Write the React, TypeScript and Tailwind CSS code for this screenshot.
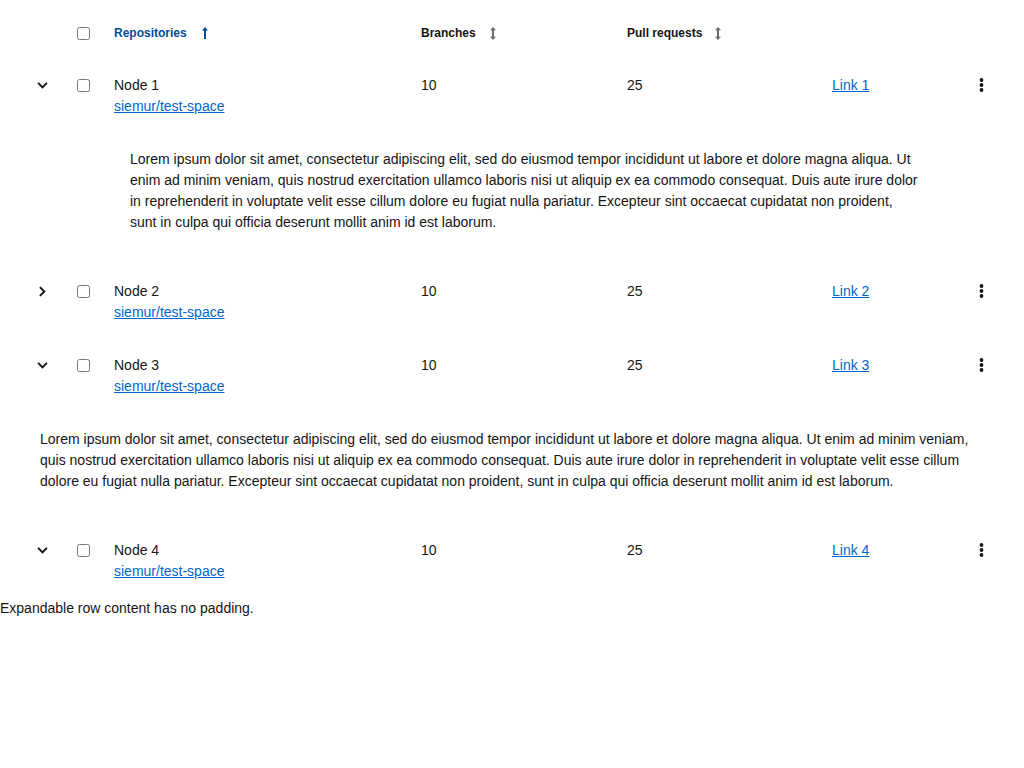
import React, { useState } from 'react';

const LOREM =
  'Lorem ipsum dolor sit amet, consectetur adipiscing elit, sed do eiusmod tempor incididunt ut labore et dolore magna aliqua. Ut enim ad minim veniam, quis nostrud exercitation ullamco laboris nisi ut aliquip ex ea commodo consequat. Duis aute irure dolor in reprehenderit in voluptate velit esse cillum dolore eu fugiat nulla pariatur. Excepteur sint occaecat cupidatat non proident, sunt in culpa qui officia deserunt mollit anim id est laborum.';

interface Repo {
  name: string;
  branches: number;
  prs: number;
  link: string;
  detail: 'indented' | 'full' | 'nopad' | null;
}

const repos: Repo[] = [
  { name: 'Node 1', branches: 10, prs: 25, link: 'Link 1', detail: 'indented' },
  { name: 'Node 2', branches: 10, prs: 25, link: 'Link 2', detail: null },
  { name: 'Node 3', branches: 10, prs: 25, link: 'Link 3', detail: 'full' },
  { name: 'Node 4', branches: 10, prs: 25, link: 'Link 4', detail: 'nopad' },
];

const AngleDown = () => (
  <svg width="11" height="7" viewBox="0 0 11 7" fill="#151515">
    <path d="M0.4 1.6 L1.8 0.2 L5.5 3.9 L9.2 0.2 L10.6 1.6 L5.5 6.7 Z" />
  </svg>
);

const AngleRight = () => (
  <svg width="7" height="11" viewBox="0 0 7 11" fill="#151515">
    <path d="M1.6 0.4 L0.2 1.8 L3.9 5.5 L0.2 9.2 L1.6 10.6 L6.7 5.5 Z" />
  </svg>
);

const Kebab = () => (
  <svg width="5" height="14" viewBox="0 0 5 14" fill="#151515">
    <circle cx="2.5" cy="2" r="1.9" />
    <circle cx="2.5" cy="7" r="1.9" />
    <circle cx="2.5" cy="12" r="1.9" />
  </svg>
);

const SortUp = () => (
  <svg width="6" height="12" viewBox="0 0 6 12" fill="#004d99">
    <path d="M3 0 L6 3.5 L4 3.5 L4 12 L2 12 L2 3.5 L0 3.5 Z" />
  </svg>
);

const SortBoth = () => (
  <svg width="6" height="13" viewBox="0 0 6 13" fill="#6a6e73">
    <path d="M3 0 L6 3.2 L4 3.2 L4 9.8 L6 9.8 L3 13 L0 9.8 L2 9.8 L2 3.2 L0 3.2 Z" />
  </svg>
);

export default function App() {
  const [open, setOpen] = useState<Record<number, boolean>>({ 0: true, 1: false, 2: true, 3: true });

  return (
    <div
      className="w-[1024px] bg-white text-[#151515] text-sm leading-[21px]"
      style={{ fontFamily: '"Liberation Sans", Arial, sans-serif' }}
    >
      {/* header */}
      <div className="flex items-start pt-[24px] pb-4 text-xs leading-[18px] font-semibold">
        <div className="w-[64px]" />
        <div className="w-[50px] h-[18px] flex items-center">
          <input type="checkbox" className="ml-[13px] w-[13px] h-[13px]" />
        </div>
        <div className="w-[307px] flex items-center text-[#004d99]">
          Repositories
          <span className="ml-[15px] flex items-center"><SortUp /></span>
        </div>
        <div className="w-[206px] flex items-center">
          Branches
          <span className="ml-[14px] flex items-center"><SortBoth /></span>
        </div>
        <div className="w-[205px] flex items-center">
          Pull requests
          <span className="ml-[13px] flex items-center"><SortBoth /></span>
        </div>
        <div className="flex-1" />
      </div>

      {repos.map((r, i) => (
        <React.Fragment key={r.name}>
          <div className="flex items-start pt-4 pb-[15px]">
            <div className="w-[64px] h-[22px] flex items-center">
              <button
                className="ml-[37px] flex items-center justify-center w-[11px]"
                onClick={() => setOpen({ ...open, [i]: !open[i] })}
              >
                {open[i] ? <AngleDown /> : <AngleRight />}
              </button>
            </div>
            <div className="w-[50px] h-[22px] flex items-center">
              <input type="checkbox" className="ml-[13px] w-[13px] h-[13px]" />
            </div>
            <div className="w-[307px] pt-[1px]">
              <div>{r.name}</div>
              <a href="#" className="text-[#0066cc] underline">siemur/test-space</a>
            </div>
            <div className="w-[206px] pt-[1px]">{r.branches}</div>
            <div className="w-[205px] pt-[1px]">{r.prs}</div>
            <div className="w-[147px] pt-[1px]">
              <a href="#" className="text-[#0066cc] underline">{r.link}</a>
            </div>
            <div className="h-[22px] flex items-center">
              <Kebab />
            </div>
          </div>
          {open[i] && r.detail === 'indented' && (
            <div className="pt-[17px] pb-[31px] pl-[130px] pr-[104px]">{LOREM}</div>
          )}
          {open[i] && r.detail === 'full' && (
            <div className="pt-[17px] pb-[31px] px-[40px]">{LOREM}</div>
          )}
          {open[i] && r.detail === 'nopad' && (
            <div className="pt-[1px]">Expandable row content has no padding.</div>
          )}
        </React.Fragment>
      ))}
    </div>
  );
}
